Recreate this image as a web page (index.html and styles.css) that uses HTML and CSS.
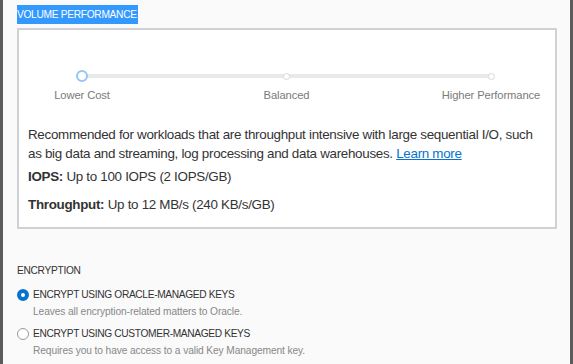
FILE: index.html
```html
<!DOCTYPE html>
<html lang="en">
<head>
    <meta charset="UTF-8">
    <meta name="viewport" content="width=device-width, initial-scale=1.0">
    <title>Volume Performance</title>
    <link rel="stylesheet" href="styles.css">
</head>
<body>
    <div class="page">
        <div class="edge"></div>
        <div class="main">
            <span class="title">VOLUME PERFORMANCE</span>

            <div class="perf-box">
                <!-- slider with three stops -->
                <div class="stops">
                    <div class="stop">
                        <div class="dot-wrap"><span class="handle"></span></div>
                        <span class="stop-label">Lower Cost</span>
                    </div>
                    <div class="stop">
                        <div class="dot-wrap"><span class="dot"></span></div>
                        <span class="stop-label">Balanced</span>
                    </div>
                    <div class="stop">
                        <div class="dot-wrap"><span class="dot"></span></div>
                        <span class="stop-label">Higher Performance</span>
                    </div>
                </div>

                <div class="details">
                    <p class="desc">Recommended for workloads that are throughput intensive with large sequential I/O, such as big data and streaming, log processing and data warehouses. <a href="#">Learn more</a></p>
                    <p class="stat"><b>IOPS:</b> Up to 100 IOPS (2 IOPS/GB)</p>
                    <p class="stat stat-last"><b>Throughput:</b> Up to 12 MB/s (240 KB/s/GB)</p>
                </div>
            </div>

            <div class="encryption">
                <div class="section-label">ENCRYPTION</div>
                <label class="option">
                    <span class="radio checked"></span>
                    <span class="option-title">ENCRYPT USING ORACLE-MANAGED KEYS</span>
                </label>
                <div class="option-desc">Leaves all encryption-related matters to Oracle.</div>
                <label class="option option-next">
                    <span class="radio"></span>
                    <span class="option-title">ENCRYPT USING CUSTOMER-MANAGED KEYS</span>
                </label>
                <div class="option-desc">Requires you to have access to a valid Key Management key.</div>
            </div>
        </div>
        <div class="edge"></div>
    </div>
</body>
</html>
```

FILE: styles.css
```css
body {
    margin: 0;
    font-family: "Liberation Sans", Arial, sans-serif;
    color: #333;
}

.page {
    display: flex;
    height: 364px;
    background-color: #fafafa;
    overflow: hidden;
}

.edge {
    width: 3px;
    background-color: #5b5b5b;
}

.main {
    flex: 1;
    padding: 4px 13px 0 14px;
}

.title {
    display: inline-block;
    background-color: #3399ff;
    color: #fff;
    font-size: 10.2px;
    letter-spacing: -0.3px;
    line-height: 19px;
    padding-right: 1px;
}

.perf-box {
    margin-top: 4px;
    border: 2px solid #cfd1d4;
    background-color: #fff;
    height: 197px;
}

/* Slider */
.stops {
    display: flex;
    justify-content: space-between;
    margin: 40px 64px 0 63px;
    background: linear-gradient(#e9e9e9, #e9e9e9) no-repeat 0 4px / 100% 4px;
}

.stop {
    width: 0;
    display: flex;
    flex-direction: column;
    align-items: center;
}

.dot-wrap {
    height: 12px;
    display: flex;
    align-items: center;
}

.handle {
    width: 8px;
    height: 8px;
    border: 2px solid #92c7f5;
    border-radius: 50%;
    background-color: #fff;
    flex: none;
}

.dot {
    width: 5px;
    height: 5px;
    border: 1px solid #d9d9d9;
    border-radius: 50%;
    background-color: #fff;
    flex: none;
}

.stop-label {
    margin-top: 6px;
    font-size: 11.2px;
    letter-spacing: -0.1px;
    line-height: 14px;
    color: #7a7a7a;
    white-space: nowrap;
}

.details {
    padding: 0 10px 0 9px;
    margin-top: 23px;
}

.details p {
    margin: 0;
    font-size: 13.4px;
    letter-spacing: -0.3px;
    line-height: 19px;
}

.desc a {
    color: #0572ce;
}

.stat {
    margin-top: 4px !important;
}

.stat-last {
    margin-top: 9px !important;
}

/* Encryption */
.encryption {
    margin-top: 35px;
}

.section-label {
    font-size: 10.2px;
    letter-spacing: -0.3px;
    line-height: 14px;
}

.option {
    display: flex;
    align-items: center;
    gap: 4px;
    margin-top: 10px;
    font-size: 10.2px;
    letter-spacing: -0.35px;
    line-height: 14px;
}

.option-next {
    margin-top: 8px;
}

.radio {
    width: 10px;
    height: 10px;
    border: 1px solid #9a9a9a;
    border-radius: 50%;
    background-color: #fff;
    flex: none;
}

.radio.checked {
    width: 4px;
    height: 4px;
    border: 4px solid #0572ce;
}

.option-desc {
    margin: 3px 0 0 16px;
    font-size: 10.2px;
    letter-spacing: -0.1px;
    line-height: 14px;
    color: #888;
}
```
